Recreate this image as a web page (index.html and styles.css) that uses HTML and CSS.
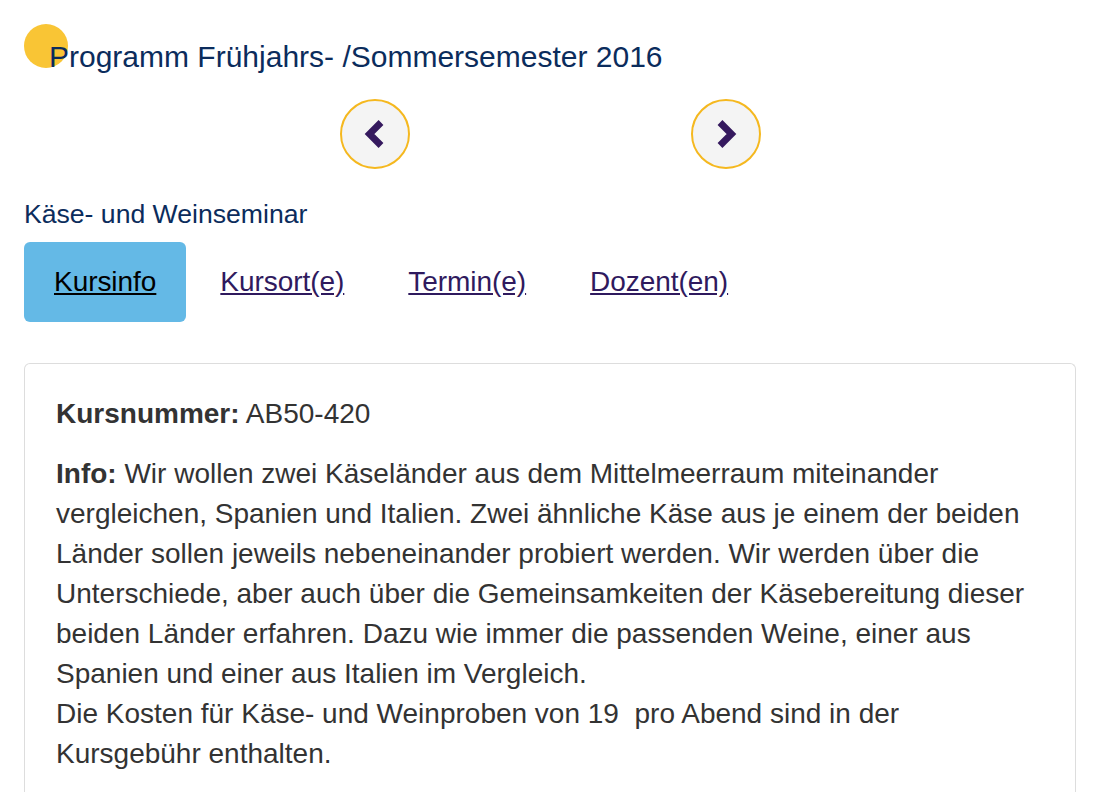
FILE: index.html
```html
<!DOCTYPE html>
<html lang="de">
<head>
<meta charset="utf-8">
<title>Programm Frühjahrs- /Sommersemester 2016</title>
<link rel="stylesheet" href="styles.css">
</head>
<body>
<div class="page">
  <h1 class="title">Programm Frühjahrs- /Sommersemester 2016</h1>
  <div class="pager">
    <a class="pager-btn" href="#" aria-label="zurück">
      <svg width="22" height="28" viewBox="0 0 22 28"><polyline points="17,2.5 5.5,14 17,25.5" fill="none" stroke="#35195e" stroke-width="6.8" stroke-linejoin="miter" stroke-miterlimit="4"/></svg>
    </a>
    <a class="pager-btn" href="#" aria-label="weiter">
      <svg width="22" height="28" viewBox="0 0 22 28"><polyline points="5,2.5 16.5,14 5,25.5" fill="none" stroke="#35195e" stroke-width="6.8" stroke-linejoin="miter" stroke-miterlimit="4"/></svg>
    </a>
  </div>
  <h2 class="subtitle">Käse- und Weinseminar</h2>
  <nav class="tabs">
    <a class="tab active" href="#">Kursinfo</a>
    <a class="tab" href="#">Kursort(e)</a>
    <a class="tab" href="#">Termin(e)</a>
    <a class="tab" href="#">Dozent(en)</a>
  </nav>
  <div class="card">
    <p><strong>Kursnummer:</strong> AB50-420</p>
    <p><strong>Info:</strong> Wir wollen zwei Käseländer aus dem Mittelmeerraum miteinander vergleichen, Spanien und Italien. Zwei ähnliche Käse aus je einem der beiden Länder sollen jeweils nebeneinander probiert werden. Wir werden über die Unterschiede, aber auch über die Gemeinsamkeiten der Käsebereitung dieser beiden Länder erfahren. Dazu wie immer die passenden Weine, einer aus Spanien und einer aus Italien im Vergleich.<br>Die Kosten für Käse- und Weinproben von 19&nbsp; pro Abend sind in der<br>Kursgebühr enthalten.</p>
  </div>
</div>
</body>
</html>
```
FILE: styles.css
```css
html, body {
  margin: 0;
  padding: 0;
  background: #ffffff;
}
body {
  font-family: "Liberation Sans", Arial, sans-serif;
  color: #333333;
}
.page {
  padding: 0 21px 0 24px;
}
.title {
  position: relative;
  z-index: 0;
  margin: 39px 0 0 0;
  padding-left: 25px;
  font-size: 30px;
  line-height: 36px;
  font-weight: normal;
  color: #0b2c5c;
}
.title::before {
  content: "";
  position: absolute;
  left: 0;
  top: -15px;
  width: 44px;
  height: 44px;
  border-radius: 50%;
  background: #f9c535;
  z-index: -1;
}
.pager {
  display: flex;
  justify-content: center;
  gap: 281px;
  margin-top: 24px;
  padding-left: 1px;
}
.pager-btn {
  width: 66px;
  height: 66px;
  border: 2px solid #f5b81f;
  border-radius: 50%;
  background: #f4f4f4;
  display: flex;
  align-items: center;
  justify-content: center;
}
.subtitle {
  margin: 29px 0 0 0;
  font-size: 26.6px;
  line-height: 32px;
  font-weight: normal;
  color: #0b2c5c;
}
.tabs {
  display: flex;
  gap: 4px;
  margin-top: 12px;
}
.tab {
  display: block;
  height: 80px;
  line-height: 80px;
  padding: 0 30px 0 30px;
  font-size: 28px;
  letter-spacing: -0.05px;
  color: #2f1a5e;
  text-decoration: underline;
  border-radius: 6px;
}
.tab.active {
  background: #64b9e6;
  color: #000000;
}
.card {
  margin-top: 41px;
  border: 1px solid #dddddd;
  border-bottom: none;
  border-radius: 6px 6px 0 0;
  padding: 30px 31px 40px 31px;
  font-size: 28px;
  line-height: 40px;
  color: #333333;
}
.card p {
  margin: 0 0 20px 0;
}
```
